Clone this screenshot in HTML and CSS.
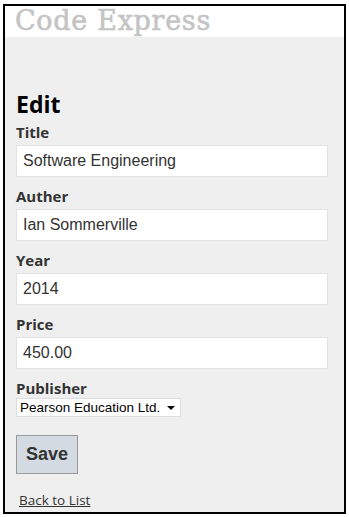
FILE: index.html
```html
<!DOCTYPE html>
<html lang="en">
<head>
    <meta charset="UTF-8">
    <meta name="viewport" content="width=device-width, initial-scale=1.0">
    <title>Edit - Code Express</title>
    <link rel="stylesheet" href="styles.css">
</head>
<body>
    <div class="frame">
        <header class="site-header">
            <p class="site-title">Code Express</p>
        </header>
        <main class="content">
            <h2>Edit</h2>
            <form class="edit-form">
                <label for="title">Title</label>
                <input type="text" id="title" value="Software Engineering">

                <label for="auther">Auther</label>
                <input type="text" id="auther" value="Ian Sommerville">

                <label for="year">Year</label>
                <input type="text" id="year" value="2014">

                <label for="price">Price</label>
                <input type="text" id="price" value="450.00">

                <label for="publisher">Publisher</label>
                <span class="select-wrap">
                    <select id="publisher">
                        <option>Pearson Education Ltd.</option>
                    </select>
                </span>

                <button type="button" class="save">Save</button>
            </form>
            <a href="#" class="back">Back to List</a>
        </main>
    </div>
</body>
</html>
```

FILE: styles.css
```css
html, body { margin: 0; padding: 0; background: white; }
body {
    font-family: "Open Sans", "Noto Sans", sans-serif;
    color: #333;
}
.frame {
    margin: 4px 3px 0 3px;
    border: 2px solid #000;
    height: 506px;
    background: #efefef;
    display: flex;
    flex-direction: column;
}
.site-header {
    background: white;
    height: 31px;
    flex-shrink: 0;
}
.site-title {
    margin: 0;
    padding-left: 10px;
    font-family: "DejaVu Serif", serif;
    font-size: 27px;
    letter-spacing: 0.7px;
    line-height: 29px;
    color: #c4c4c4;
    -webkit-text-stroke: 0.6px #c4c4c4;
}
.content {
    padding: 0 16px 0 11px;
}
h2 {
    margin: 52px 0 3px 0;
    font-size: 23px;
    line-height: 30px;
    color: #000;
}
.edit-form {
    display: flex;
    flex-direction: column;
    align-items: flex-start;
}
label {
    font-weight: bold;
    font-size: 15px;
    line-height: 20px;
}
input {
    box-sizing: border-box;
    width: 312px;
    height: 32px;
    margin: 3px 0 9px 0;
    padding: 0 6px;
    border: 1px solid #e2e2e2;
    background: white;
    font-family: "Liberation Sans", Arial, sans-serif;
    font-size: 16px;
    color: #333;
}
.select-wrap {
    position: relative;
}
.select-wrap::after {
    content: "";
    position: absolute;
    right: 6px;
    top: 8px;
    border-left: 4px solid transparent;
    border-right: 4px solid transparent;
    border-top: 4px solid #000;
    pointer-events: none;
}
select {
    appearance: none;
    -webkit-appearance: none;
    display: block;
    box-sizing: border-box;
    width: 165px;
    height: 19px;
    border: 1px solid #dcdcdc;
    border-radius: 0;
    background: white;
    font-family: "Liberation Sans", Arial, sans-serif;
    font-size: 13.5px;
    line-height: 17px;
    color: #000;
    padding: 0 0 0 3px;
}
.save {
    margin-top: 18px;
    width: 62px;
    height: 39px;
    background: #d3dae1;
    border: 1px solid #9a9a9a;
    font-family: "Liberation Sans", Arial, sans-serif;
    font-weight: bold;
    font-size: 18px;
    color: #333;
    cursor: pointer;
}
.back {
    display: inline-block;
    margin: 17px 0 0 3px;
    font-size: 13.5px;
    color: #333;
}
```
